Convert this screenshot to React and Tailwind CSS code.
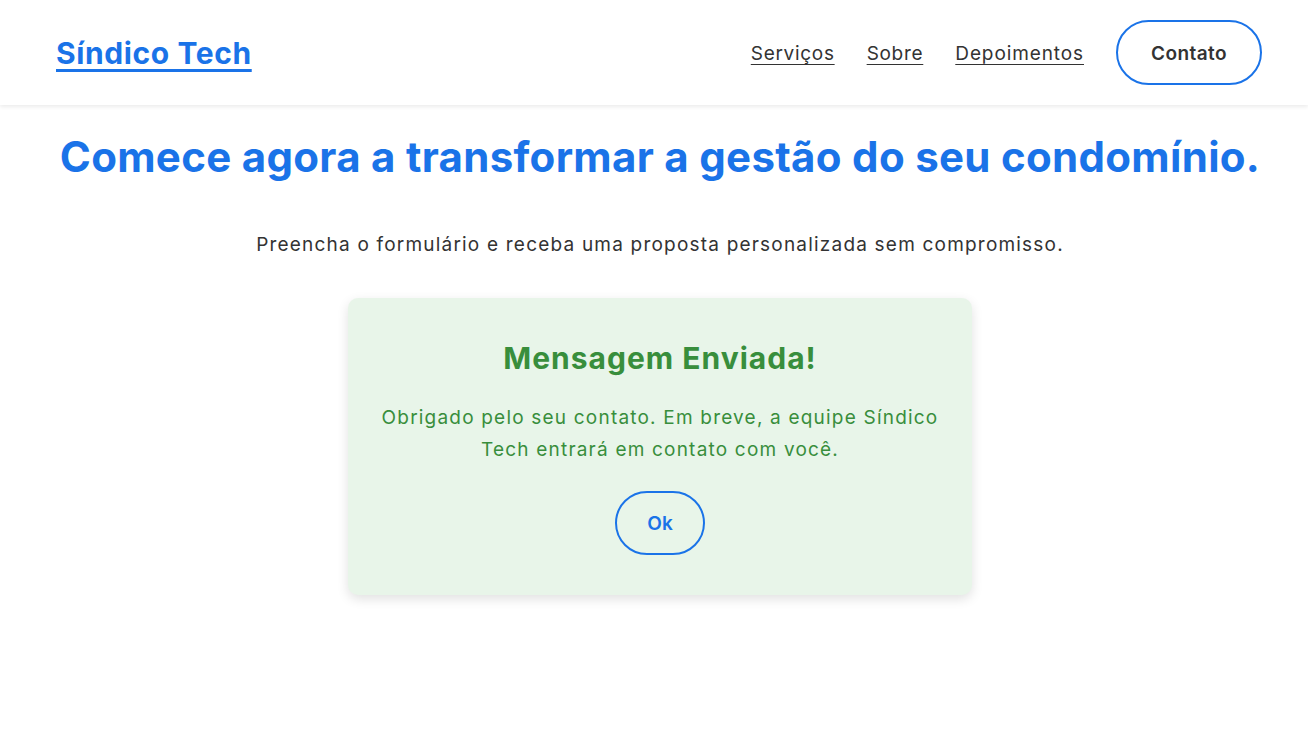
export default function App() {
    return (
        <div className="min-h-[750px] bg-white text-[#333333] font-['Inter','Noto_Sans',sans-serif]">
            <header className="h-[105px] flex items-center justify-between pl-14 pr-[46px] bg-white shadow-[0_2px_4px_rgba(0,0,0,0.08)]">
                <a href="#" className="text-[30px] tracking-[0.6px] font-bold text-[#1a73e8] underline underline-offset-[5px] decoration-[3px] leading-none">
                    Síndico Tech
                </a>
                <nav className="flex items-center gap-[32px]">
                    <a href="#" className="pt-[3px] text-[19px] tracking-[0.7px] text-[#333333] underline underline-offset-[4px]">Serviços</a>
                    <a href="#" className="pt-[3px] text-[19px] tracking-[0.7px] text-[#333333] underline underline-offset-[4px]">Sobre</a>
                    <a href="#" className="pt-[3px] text-[19px] tracking-[0.9px] text-[#333333] underline underline-offset-[4px]">Depoimentos</a>
                    <button className="w-[146px] h-[65px] pt-[3px] rounded-full border-2 border-[#1a73e8] text-[19px] tracking-[0.4px] font-semibold text-[#333333]">
                        Contato
                    </button>
                </nav>
            </header>

            <main className="flex flex-col items-center pl-[12px]">
                <h1 className="mt-[28px] text-[42px] tracking-[0.3px] leading-[48px] font-bold text-[#1a73e8] text-center">
                    Comece agora a transformar a gestão do seu condomínio.
                </h1>
                <p className="mt-[50px] text-[19px] tracking-[1.2px] leading-[28px] text-center text-[#333333]">
                    Preencha o formulário e receba uma proposta personalizada sem compromisso.
                </p>

                <div className="mt-[39px] w-[624px] h-[297px] rounded-[10px] bg-[#e8f5e9] shadow-[0_4px_12px_rgba(0,0,0,0.12)] flex flex-col items-center pt-[40px]">
                    <h2 className="text-[30px] tracking-[1px] leading-[40px] font-bold text-[#388e3c]">Mensagem Enviada!</h2>
                    <p className="mt-[24px] w-[580px] text-[19px] tracking-[1.2px] leading-[32px] text-center text-[#388e3c]">
                        Obrigado pelo seu contato. Em breve, a equipe Síndico Tech entrará em contato com você.
                    </p>
                    <button className="mt-[25px] w-[90px] h-[64px] pt-[3px] rounded-full border-2 border-[#1a73e8] text-[19px] font-semibold text-[#1a73e8]">
                        Ok
                    </button>
                </div>
            </main>
        </div>
    );
}
